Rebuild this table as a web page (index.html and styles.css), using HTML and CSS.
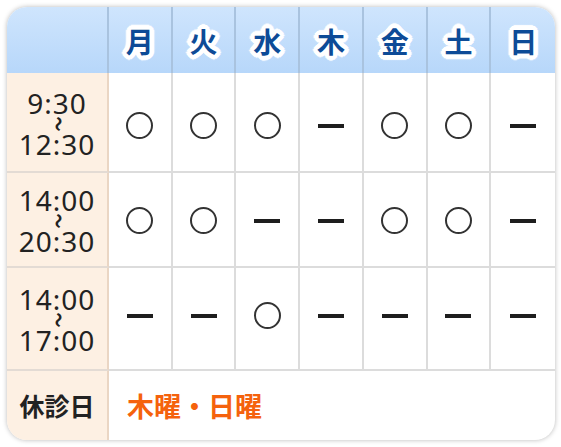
FILE: index.html
```html
<!DOCTYPE html>
<html lang="ja">
<head>
<meta charset="utf-8">
<link rel="stylesheet" href="styles.css">
</head>
<body>
<div class="card">
  <div class="grid">
    <div class="hd corner"></div>
    <div class="hd"><span class="day">月</span></div>
    <div class="hd"><span class="day">火</span></div>
    <div class="hd"><span class="day">水</span></div>
    <div class="hd"><span class="day">木</span></div>
    <div class="hd"><span class="day">金</span></div>
    <div class="hd"><span class="day">土</span></div>
    <div class="hd last"><span class="day">日</span></div>

    <div class="tm r1"><span>9:30</span><span class="tilde">〜</span><span>12:30</span></div>
    <div class="c r1"><i class="o"></i></div>
    <div class="c r1"><i class="o"></i></div>
    <div class="c r1"><i class="o"></i></div>
    <div class="c r1"><i class="d"></i></div>
    <div class="c r1"><i class="o"></i></div>
    <div class="c r1"><i class="o"></i></div>
    <div class="c r1 last"><i class="d"></i></div>

    <div class="tm r2"><span>14:00</span><span class="tilde">〜</span><span>20:30</span></div>
    <div class="c r2"><i class="o"></i></div>
    <div class="c r2"><i class="o"></i></div>
    <div class="c r2"><i class="d"></i></div>
    <div class="c r2"><i class="d"></i></div>
    <div class="c r2"><i class="o"></i></div>
    <div class="c r2"><i class="o"></i></div>
    <div class="c r2 last"><i class="d"></i></div>

    <div class="tm r3"><span>14:00</span><span class="tilde">〜</span><span>17:00</span></div>
    <div class="c r3"><i class="d"></i></div>
    <div class="c r3"><i class="d"></i></div>
    <div class="c r3"><i class="o"></i></div>
    <div class="c r3"><i class="d"></i></div>
    <div class="c r3"><i class="d"></i></div>
    <div class="c r3"><i class="d"></i></div>
    <div class="c r3 last"><i class="d"></i></div>

    <div class="tm closed-label">休診日</div>
    <div class="closed">木曜・日曜</div>
  </div>
</div>
</body>
</html>
```

FILE: styles.css
```css
html, body {
  margin: 0;
  padding: 0;
  background: #ffffff;
}
body {
  padding: 7px 6px 7px 7px;
  font-family: "Noto Sans CJK JP", "Noto Sans", sans-serif;
}
.card {
  width: 548px;
  height: 433px;
  border-radius: 20px;
  background: #ffffff;
  box-shadow: 0 0 5px rgba(0, 0, 0, 0.28);
  overflow: hidden;
}
.grid {
  display: grid;
  grid-template-columns: 102px repeat(7, 1fr);
  grid-template-rows: 66px 100px 95px 103px 1fr;
  height: 100%;
}
.hd {
  background: linear-gradient(#cfe5fd, #b7d7fa);
  border-right: 2px solid #a9c3df;
  display: flex;
  align-items: center;
  justify-content: center;
}
.hd.last { border-right: none; }
.day {
  font-size: 28px;
  font-weight: 700;
  color: #0d4b97;
  line-height: 1;
  padding-top: 1px;
  text-shadow:
    4px 0 0 #fff, -4px 0 0 #fff, 0 4px 0 #fff, 0 -4px 0 #fff,
    3px 3px 0 #fff, -3px 3px 0 #fff, 3px -3px 0 #fff, -3px -3px 0 #fff,
    4px 2px 0 #fff, -4px 2px 0 #fff, 4px -2px 0 #fff, -4px -2px 0 #fff,
    2px 4px 0 #fff, -2px 4px 0 #fff, 2px -4px 0 #fff, -2px -4px 0 #fff,
    5px 0 1px #fff, -5px 0 1px #fff, 0 5px 1px #fff, 0 -5px 1px #fff;
}
.tm {
  background: #fdf0e3;
  border-right: 2px solid #ead6c4;
  border-bottom: 2px solid #e3dbd4;
  display: flex;
  flex-direction: column;
  align-items: center;
  justify-content: center;
  font-family: "Noto Sans", "Noto Sans CJK JP", sans-serif;
  font-size: 28px;
  letter-spacing: 1px;
  color: #222222;
  line-height: 27px;
  padding-top: 3px;
}
.tilde {
  display: block;
  font-family: "Noto Sans CJK JP", sans-serif;
  font-size: 15px;
  line-height: 14px;
  height: 14px;
  width: 15px;
  letter-spacing: 0;
  text-align: center;
  transform: rotate(90deg) scaleY(1.3);
  font-weight: 700;
  margin-left: 2px;
}
.c {
  border-right: 2px solid #dcdcdc;
  border-bottom: 2px solid #dcdcdc;
  display: flex;
  align-items: center;
  justify-content: center;
  padding-top: 2px;
}
.c.r1 { padding-top: 7px; }
.c.r3 { padding-top: 0; padding-bottom: 6px; }
.c.last { border-right: none; }
.o {
  display: block;
  width: 23px;
  height: 23px;
  border: 2px solid #333333;
  border-radius: 50%;
}
.d {
  display: block;
  width: 26px;
  height: 4px;
  background: #1e1e1e;
}
.closed-label {
  border-bottom: none;
  font-family: "Noto Sans CJK JP", sans-serif;
  font-size: 25px;
  letter-spacing: 0;
  font-weight: 700;
  padding-top: 0;
}
.closed {
  grid-column: 2 / span 7;
  display: flex;
  align-items: center;
  padding-left: 18px;
  padding-top: 0;
  font-size: 27px;
  font-weight: 700;
  color: #f5620d;
}
```
